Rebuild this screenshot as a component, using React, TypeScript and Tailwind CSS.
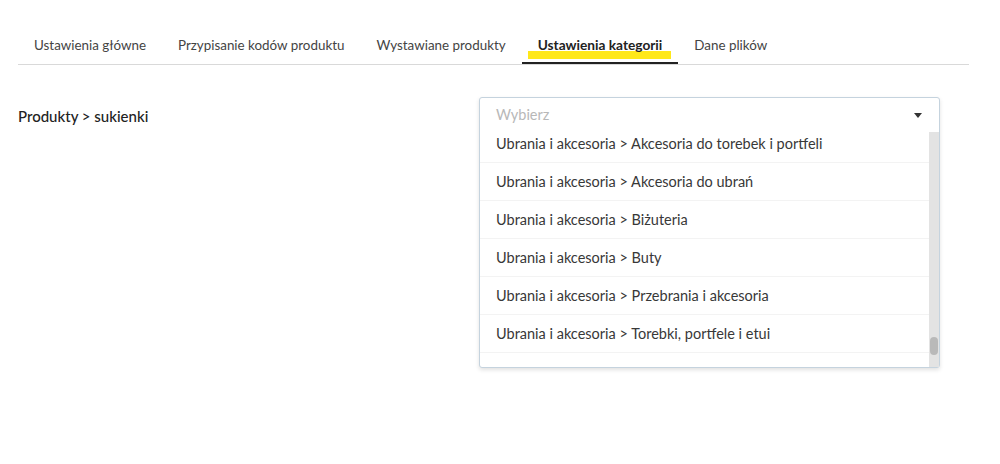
const tabs = [
  "Ustawienia główne",
  "Przypisanie kodów produktu",
  "Wystawiane produkty",
  "Ustawienia kategorii",
  "Dane plików",
]

const options = [
  "Ubrania i akcesoria > Akcesoria do torebek i portfeli",
  "Ubrania i akcesoria > Akcesoria do ubrań",
  "Ubrania i akcesoria > Biżuteria",
  "Ubrania i akcesoria > Buty",
  "Ubrania i akcesoria > Przebrania i akcesoria",
  "Ubrania i akcesoria > Torebki, portfele i etui",
]

const ACTIVE = "Ustawienia kategorii"

export default function App() {
  return (
    <div
      className="min-h-[464px] w-[1000px] bg-white pl-[18px] pt-[28px] text-[#333]"
      style={{ fontFamily: "Lato, 'Open Sans', sans-serif" }}
    >
      {/* tabs */}
      <nav className="flex w-[951px] border-b border-[#d9d9d9]">
        {tabs.map((tab) => {
          const active = tab === ACTIVE
          return (
            <div
              key={tab}
              className={
                active
                  ? "relative -mb-px flex h-9 items-center border-b-2 border-[#222] px-4 text-[13.7px] font-bold text-[#222]"
                  : "flex h-9 items-center px-4 pb-px text-[13.4px] text-[#444]"
              }
            >
              {active && (
                <span className="absolute left-[6px] right-[7px] top-[23px] h-[8px] bg-[#ffe81a]" />
              )}
              <span className="relative">{tab}</span>
            </div>
          )
        })}
      </nav>

      {/* category mapping */}
      <div className="mt-[32px] flex">
        <div className="w-[461px] pt-[8px] text-[15px] font-medium text-[#222]">
          Produkty &gt; sukienki
        </div>

        <div className="flex h-[271px] w-[461px] flex-col rounded-[3px] border border-[#c5d3de] bg-white shadow-[0_2px_4px_rgba(0,0,0,0.12)]">
          <div className="flex h-[34px] shrink-0 items-center justify-between pl-4 pr-4">
            <span className="text-[14.5px] text-[#b8b8b8]">Wybierz</span>
            <svg width="8" height="5" viewBox="0 0 8 5" className="mr-px mt-px">
              <path d="M0 0 H8 L4 5 Z" fill="#333" />
            </svg>
          </div>

          <div className="flex min-h-0 flex-1">
            <div className="flex-1 overflow-hidden">
              <ul className="-mt-[7px]">
                {options.map((opt) => (
                  <li
                    key={opt}
                    className="flex h-[38px] items-center border-b border-[#f3f3f3] px-4 text-[14.5px] text-[#383838]"
                  >
                    {opt}
                  </li>
                ))}
              </ul>
            </div>
            <div className="flex w-[10px] shrink-0 flex-col justify-end bg-[#e3e3e3] px-px pb-[12px]">
              <div className="h-[18px] rounded-full bg-[#b9b9b9]" />
            </div>
          </div>
        </div>
      </div>
    </div>
  )
}
